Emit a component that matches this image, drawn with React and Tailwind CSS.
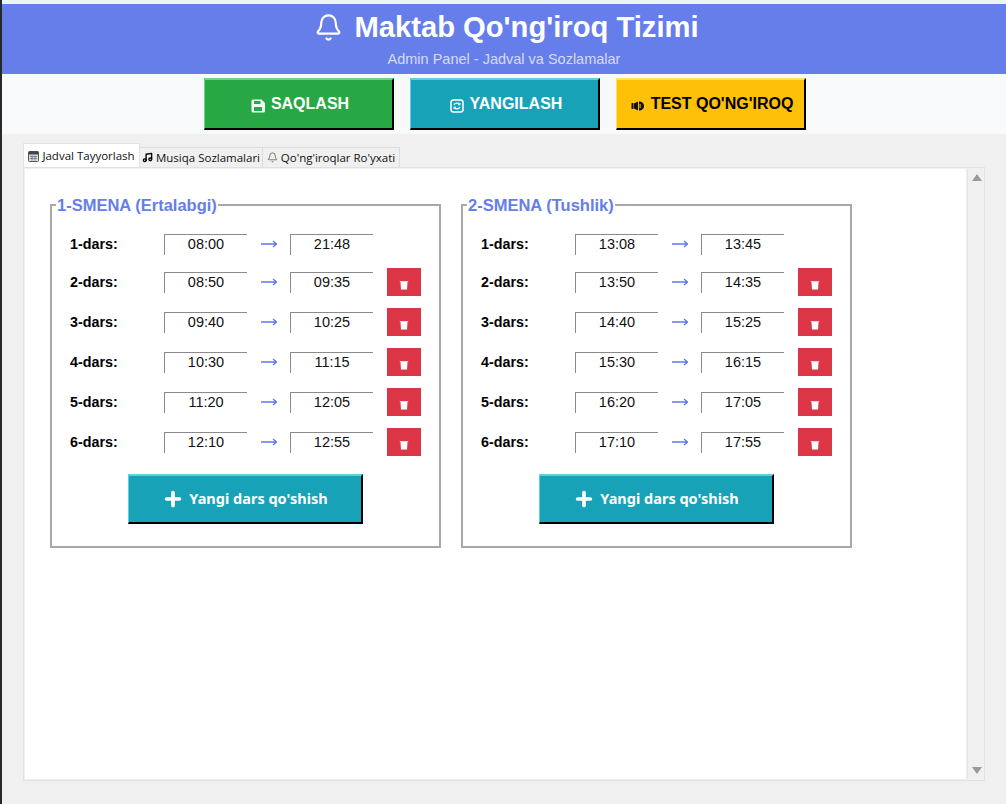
import React from 'react';
import { Bell, Plus, Music } from 'lucide-react';

const shift1 = [
  ['1-dars:', '08:00', '21:48'],
  ['2-dars:', '08:50', '09:35'],
  ['3-dars:', '09:40', '10:25'],
  ['4-dars:', '10:30', '11:15'],
  ['5-dars:', '11:20', '12:05'],
  ['6-dars:', '12:10', '12:55'],
];

const shift2 = [
  ['1-dars:', '13:08', '13:45'],
  ['2-dars:', '13:50', '14:35'],
  ['3-dars:', '14:40', '15:25'],
  ['4-dars:', '15:30', '16:15'],
  ['5-dars:', '16:20', '17:05'],
  ['6-dars:', '17:10', '17:55'],
];

const sans = "font-['Liberation_Sans',Arial,sans-serif]";

function SaveIcon() {
  return (
    <svg width="14" height="14" viewBox="0 0 14 14" className="mt-[3px]">
      <path d="M2 0.500h8.500L14 4v8a1.500 1.500 0 0 1-1.500 1.500h-10.500A1.500 1.500 0 0 1 .5 12V2A1.500 1.500 0 0 1 2 .5Z" fill="#f4fbf5" />
      <rect x="3" y="2" width="6.500" height="3" fill="#28a745" />
      <rect x="3" y="8" width="8" height="4" fill="#28a745" />
    </svg>
  );
}

function RefreshBox() {
  return (
    <svg width="14" height="14" viewBox="0 0 14 14" fill="none" stroke="white" className="mt-[3px]">
      <rect x="1" y="1" width="12" height="12" rx="2.500" strokeWidth="1.500" />
      <path d="M4 6c.5-1.300 1.500-1.800 3-1.800 1 0 1.800.4 2.400 1M10 8c-.5 1.300-1.500 1.800-3 1.800-1 0-1.800-.4-2.400-1" strokeWidth="1.300" />
      <path d="M10 3.800v2H8M4 10.200v-2h2" strokeWidth="1" />
    </svg>
  );
}

function BellRing() {
  return (
    <svg width="14" height="12" viewBox="0 0 14 12" className="mt-[3px]" fill="#111">
      <rect x="0.500" y="3" width="2" height="6" rx="0.500" />
      <path d="M3 3.500L7 1.500V10.500L3 8.500Z" />
      <path d="M8 1.500c3 0 5 2 5 4.500s-2 4.500-5 4.500Z" />
      <rect x="8.600" y="4" width="1" height="4" fill="#ffc107" />
    </svg>
  );
}

function CalendarIcon() {
  return (
    <svg width="11" height="11" viewBox="0 0 11 11" className="shrink-0 mt-[2px]">
      <rect x="0.500" y="0.500" width="10" height="10" rx="1" fill="#d8dce2" stroke="#555" />
      <rect x="0.500" y="0.500" width="10" height="3" fill="#444" />
      <path d="M2 5.500h7M2 7.500h7M4 4.500v5M7 4.500v5" stroke="#667" strokeWidth="0.700" />
    </svg>
  );
}

function TrashCup() {
  return (
    <svg width="10" height="10" viewBox="0 0 10 10" className="mt-[5px]">
      <path d="M0.500 1h9l-.6 1H1.100Z" fill="#fbd5da" />
      <path d="M1.500 2h7L8 9.500H2Z" fill="white" />
    </svg>
  );
}

function TimeInput({ value }) {
  return (
    <input
      readOnly
      value={value}
      className={`w-[83px] h-[21px] text-center text-[14.500px] text-[#111] bg-white border-t border-l border-t-[#8a8a8a] border-l-[#8a8a8a] outline-none ${sans}`}
    />
  );
}

function LessonRow({ label, start, end, first }) {
  return (
    <div className={`flex items-center h-7 ${first ? 'mt-[1px] mb-[-2px]' : ''}`}>
      <div className={`w-[94px] pt-[1px] text-[14.300px] font-bold text-black ${sans}`}>{label}</div>
      <TimeInput value={start} />
      <div className="w-[43px] flex justify-center">
        <svg width="16" height="8" viewBox="0 0 16 8" fill="none" stroke="#5f78ee" strokeWidth="1.300">
          <path d="M0 4h15.500M12 1l3.500 3-3.500 3" />
        </svg>
      </div>
      <TimeInput value={end} />
      {!first && (
        <button className="ml-[14px] w-[34px] h-7 bg-[#dc3545] flex justify-center items-center">
          <TrashCup />
        </button>
      )}
    </div>
  );
}

function ShiftBox({ title, rows }) {
  return (
    <fieldset className="w-[391px] border-2 border-[#a8a8a8] pl-[18px] pr-[18px] pt-[15px] pb-[22px]">
      <legend className={`ml-[-14px] px-[1px] text-[16.500px] leading-[18px] font-bold text-[#667eea] ${sans}`}>{title}</legend>
      <div className="flex flex-col gap-3">
        {rows.map((r, i) => (
          <LessonRow key={r[0]} label={r[0]} start={r[1]} end={r[2]} first={i === 0} />
        ))}
      </div>
      <div className="flex justify-center mt-[18px]">
        <button className="w-[235px] h-[50px] bg-[#17a2b8] border-t-2 border-l border-r-2 border-b-2 border-t-[#5fcfe0] border-l-[#5fcfe0] border-r-black border-b-black flex items-center justify-center gap-[5px] text-white text-[14.500px] font-bold font-['Noto_Sans',sans-serif]">
          <Plus size={22} strokeWidth={4} />
          Yangi dars qo'shish
        </button>
      </div>
    </fieldset>
  );
}

function ActionButton({ className, children }) {
  return (
    <button className={`w-[190px] h-[52px] border-t-2 border-l border-r-2 border-b-2 border-r-black border-b-black flex items-center justify-center gap-[6px] pl-[3px] text-[16px] font-bold ${sans} ${className}`}>
      {children}
    </button>
  );
}

export default function App() {
  return (
    <div className="h-[804px] overflow-hidden flex flex-col bg-[#f0f0f0] border-l-2 border-[#26282c]">
      <div className="h-1 bg-[#e9f6f4]" />
      <header className="h-[70px] bg-[#667eea] flex flex-col items-center text-white">
        <h1 className={`h-[46px] pt-[1px] flex items-center gap-[11px] text-[29.200px] font-bold ml-[5px] ${sans}`}>
          <Bell size={29} strokeWidth={1.800} />
          Maktab Qo'ng'iroq Tizimi
        </h1>
        <p className={`text-[14.500px] leading-[18px] text-[#d5dbf8] ${sans}`}>Admin Panel - Jadval va Sozlamalar</p>
      </header>

      <div className="h-[60px] bg-[#f8f9fa] flex justify-center gap-4 pt-1 pl-[2px]">
        <ActionButton className="bg-[#28a745] text-white border-t-[#66d884] border-l-[#66d884]">
          <SaveIcon />
          SAQLASH
        </ActionButton>
        <ActionButton className="bg-[#17a2b8] text-white border-t-[#5fcfe0] border-l-[#5fcfe0]">
          <RefreshBox />
          YANGILASH
        </ActionButton>
        <ActionButton className="bg-[#ffc107] text-black border-t-[#ffe35c] border-l-[#ffe35c]">
          <BellRing />
          TEST QO'NG'IROQ
        </ActionButton>
      </div>

      <main className="flex-1 flex flex-col pt-[10px] pb-[23px] pl-[21px] pr-[21px]">
        <div className="h-[23px] flex items-end text-[11.500px] text-[#111] font-['Open_Sans',sans-serif]">
          <div className="w-[117px] h-[24px] bg-white border border-b-0 border-[#e2e2e2] flex items-center justify-center gap-[3px]">
            <CalendarIcon />
            Jadval Tayyorlash
          </div>
          <div className="w-[123px] h-[20px] bg-[#f0f0f0] border-t border-r border-[#dcdcdc] flex items-center justify-center gap-[3px]">
            <Music size={11} strokeWidth={3} className="text-black" />
            Musiqa Sozlamalari
          </div>
          <div className="w-[137px] h-[20px] bg-[#f0f0f0] border-t border-r border-[#dcdcdc] flex items-center justify-center gap-[3px]">
            <Bell size={11} strokeWidth={1.500} className="text-[#444]" />
            Qo'ng'iroqlar Ro'yxati
          </div>
        </div>
        <div className="flex-1 flex border border-[#e0e0e0] pl-[1px] pt-[1px] pb-[1px]">
          <div className="flex-1 bg-white flex items-start gap-[20px] pl-[25px] pt-[27px]">
            <ShiftBox title="1-SMENA (Ertalabgi)" rows={shift1} />
            <ShiftBox title="2-SMENA (Tushlik)" rows={shift2} />
          </div>
          <div className="w-[17px] ml-[1px] flex flex-col items-center justify-between py-[5px] pl-[2px] bg-[#f0f0f0] border-l border-[#e4e4e4]">
            <div className="w-0 h-0 border-l-[5px] border-r-[5px] border-b-[7px] border-l-transparent border-r-transparent border-b-[#9a9a9a]" />
            <div className="w-0 h-0 border-l-[5px] border-r-[5px] border-t-[7px] border-l-transparent border-r-transparent border-t-[#9a9a9a]" />
          </div>
        </div>
      </main>
    </div>
  );
}
